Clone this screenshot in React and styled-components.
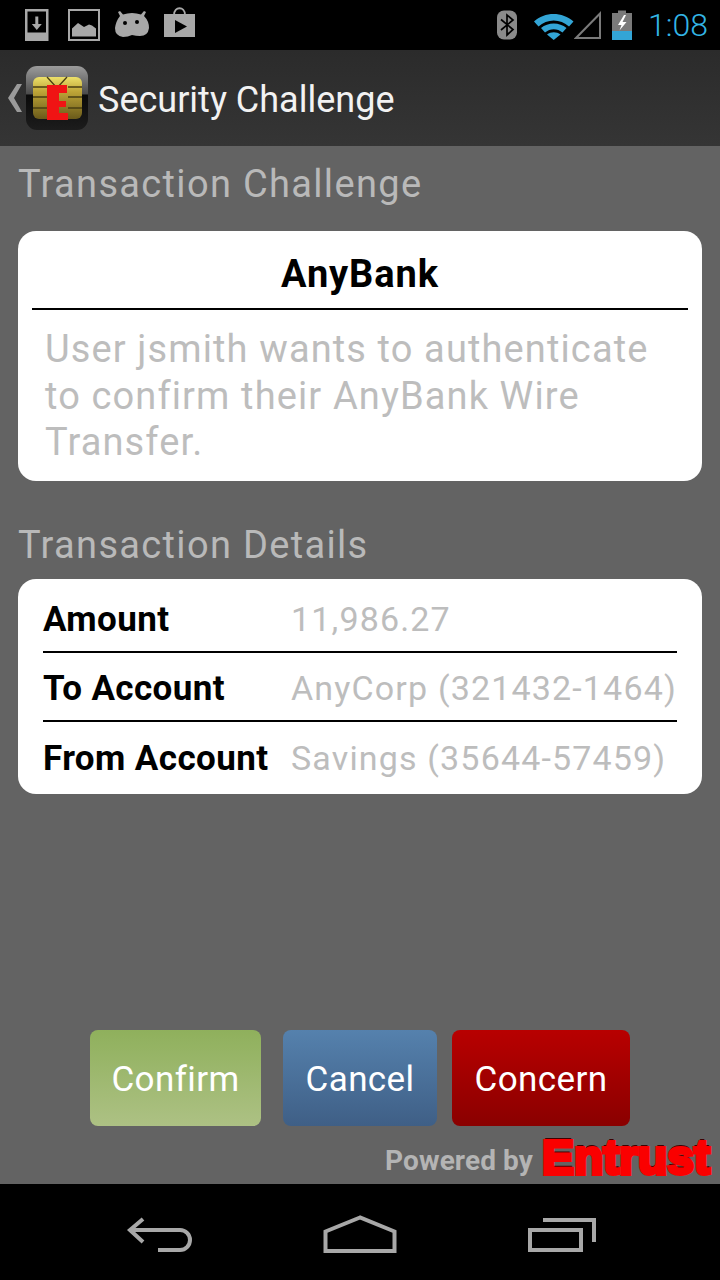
import React from "react";
import styled, { createGlobalStyle } from "styled-components";

const GlobalStyle = createGlobalStyle`
  html, body {
    margin: 0;
    padding: 0;
    background: #000;
  }
  body {
    font-family: Roboto, "Liberation Sans", sans-serif;
  }
`;

const DETAILS = [
  { label: "Amount", value: "11,986.27" },
  { label: "To Account", value: "AnyCorp (321432-1464)" },
  { label: "From Account", value: "Savings (35644-57459)" },
];

function NotificationIcons() {
  return (
    <IconRow>
      <svg width="28" height="32" viewBox="0 0 28 32">
        <path fill="#a8a8a8" d="M0 0h23.500v32H0z" />
        <path fill="#000" d="M2.500 2.500h18.500v21H2.500z" />
        <path fill="#a8a8a8" d="M10.300 7.500h3v7.500h3.500l-5 6-5-6h3.500z" />
      </svg>
      <svg width="32" height="32" viewBox="0 0 32 32">
        <path fill="none" stroke="#a8a8a8" strokeWidth="2" d="M1 1h30v30h-30z" />
        <path fill="#a8a8a8" d="M4 27.500v-8l6-5.500 6 4 5-2.500 3 1 4 3v8z" />
      </svg>
      <svg width="34" height="32" viewBox="0 0 34 32">
        <path fill="#a8a8a8" d="M5 7L3 3l2-1 3 3.500Q17 2.500 26 5.500L29 2l2 1-2 4Q34 12 34 19 33 27 25 27 21 27 17 26 13 28 8 28 0 27 0 19 1 12 5 7z" />
        <circle cx="10" cy="14" r="2" fill="#000" />
        <circle cx="22" cy="13" r="2" fill="#000" />
      </svg>
      <svg width="31" height="36" viewBox="0 0 31 36">
        <path fill="none" stroke="#a8a8a8" strokeWidth="1.800" d="M10 8c0-9 11-9 11 0" />
        <path fill="#a8a8a8" d="M0 7h31v23h-31z" />
        <path fill="#000" d="M11 13l12 6.500-12 6.500z" />
      </svg>
    </IconRow>
  );
}

function SystemIcons() {
  return (
    <IconRow>
      <Bluetooth width="22" height="30" viewBox="0 0 22 30">
        <rect x="1" y="0.500" width="20" height="29" rx="7" fill="#8a8a8a" />
        <path fill="none" stroke="#000" strokeWidth="1.700" d="M5 9.500l12 10-6 5.500v-20l6 5-12 10" />
      </Bluetooth>
      <WifiGap>
        <svg width="40" height="30" viewBox="0 0 40 30">
          <path fill="#33a5d6" d="M0 11.500C10.500 1.500 28.500 1.500 39.500 11.500L35 16.500C26.500 8.500 13 8.500 4.500 16.500z" />
          <path fill="#33a5d6" d="M7 18C14 12 25.500 12 32.500 18L28.500 22.500C23.500 18 16 18 11 22.500z" />
          <path fill="#33a5d6" d="M13 24.500C17 21.500 22.500 21.500 26.500 24.500L19.700 30z" />
        </svg>
        <svg width="28" height="30" viewBox="0 0 28 30">
          <path fill="none" stroke="#7a7a7a" strokeWidth="2" d="M26 3.500v24.500h-24z" />
        </svg>
      </WifiGap>
      <svg width="20" height="30" viewBox="0 0 20 30">
        <path fill="#7a7a7a" d="M6 0.500h8v2.500h6v27h-20v-27h6z" />
        <path fill="#33a5d6" d="M0 21h20v9h-20z" />
        <path fill="#fff" d="M12 5l-6 10h3.500l-2 5.500 7-8.500h-4l3.500-7z" />
      </svg>
      <Clock>1:08</Clock>
    </IconRow>
  );
}

function AppIcon() {
  return (
    <svg width="62" height="64" viewBox="0 0 62 64">
      <defs>
        <linearGradient id="iconShine" x1="0" y1="0" x2="0" y2="1">
          <stop offset="0" stopColor="#9c9c9c" />
          <stop offset="0.440" stopColor="#4a4a4a" />
          <stop offset="0.450" stopColor="#0a0a0a" />
          <stop offset="1" stopColor="#1c1c1c" />
        </linearGradient>
        <linearGradient id="chipGold" x1="0" y1="0" x2="0" y2="1">
          <stop offset="0" stopColor="#ece06a" />
          <stop offset="0.350" stopColor="#bda437" />
          <stop offset="1" stopColor="#6a5a1a" />
        </linearGradient>
      </defs>
      <rect width="62" height="64" rx="11" fill="url(#iconShine)" />
      <rect x="7" y="11" width="49" height="42" rx="6" fill="url(#chipGold)" />
      <path fill="none" stroke="#4a3f12" strokeWidth="1.300" d="M7 21h14M42 21h14M7 31h14M42 31h14M7 42h14M42 42h14M21 11l10 11 10-11" />
      <path fill="#f01414" d="M21 19h20v8h-8v8h7v6h-7v6h9v7h-21z" />
    </svg>
  );
}

export default function App() {
  return (
    <Screen>
      <GlobalStyle />
      <StatusBar>
        <NotificationIcons />
        <SystemIcons />
      </StatusBar>
      <ActionBar>
        <BackChevron viewBox="0 0 14 28">
          <path fill="#9a9a9a" d="M9 0h5L6 14l8 14H9L0 14z" />
        </BackChevron>
        <AppIcon />
        <BarTitle>Security Challenge</BarTitle>
      </ActionBar>
      <Content>
        <SectionTitle>Transaction Challenge</SectionTitle>
        <Card>
          <BankName>AnyBank</BankName>
          <Message>
            User jsmith wants to authenticate to confirm their AnyBank Wire
            Transfer.
          </Message>
        </Card>
        <DetailsTitle>Transaction Details</DetailsTitle>
        <DetailsCard>
          {DETAILS.map((d) => (
            <DetailRow key={d.label}>
              <DetailLabel>{d.label}</DetailLabel>
              <DetailValue>{d.value}</DetailValue>
            </DetailRow>
          ))}
        </DetailsCard>
        <Spacer />
        <Buttons>
          <ActionButton $width={171} $from="#8fb05c" $to="#adc184">
            Confirm
          </ActionButton>
          <ActionButton $width={154} $gap={22} $from="#5581ad" $to="#3f5f86">
            Cancel
          </ActionButton>
          <ActionButton $width={178} $gap={15} $from="#b80000" $to="#8a0000">
            Concern
          </ActionButton>
        </Buttons>
        <PoweredRow>
          <PoweredBy>Powered by</PoweredBy>
          <Entrust>Entrust</Entrust>
        </PoweredRow>
      </Content>
      <NavBar>
        <svg width="68" height="38" viewBox="0 -3 68 38">
          <path fill="none" stroke="#a8a8a8" strokeWidth="4" d="M17 1L4 12l13 12M4 12h50a10 10 0 0 1 0 20h-22" />
        </svg>
        <svg width="74" height="38" viewBox="0 0 74 38">
          <path fill="none" stroke="#a8a8a8" strokeWidth="4" d="M37 2.500L2.500 16.500v19.500h69v-19.500z" />
        </svg>
        <svg width="70" height="38" viewBox="0 -3 70 38">
          <path fill="none" stroke="#a8a8a8" strokeWidth="4" d="M4 12h51v20h-51zM17 2h51v22" />
        </svg>
      </NavBar>
    </Screen>
  );
}

const Screen = styled.div`
  width: 720px;
  height: 1280px;
  display: flex;
  flex-direction: column;
  overflow: hidden;
`;

const StatusBar = styled.div`
  height: 50px;
  flex: none;
  display: flex;
  align-items: center;
  justify-content: space-between;
  padding: 0 12px 0 25px;
  box-sizing: border-box;
  background: #000;
`;

const IconRow = styled.div`
  display: flex;
  align-items: center;
  gap: 15px;
`;

const Bluetooth = styled.svg`
  margin-right: 1px;
`;

const WifiGap = styled.div`
  display: flex;
  align-items: center;
  gap: 0;
  margin-right: -5px;
`;

const Clock = styled.span`
  font-size: 32px;
  font-weight: 300;
  line-height: 50px;
  color: #33b5e5;
  margin-left: 1px;
`;

const ActionBar = styled.div`
  height: 96px;
  flex: none;
  display: flex;
  align-items: center;
  padding: 0 0 0 8px;
  box-sizing: border-box;
  background: linear-gradient(#2b2b2b, #353535);
`;

const BackChevron = styled.svg`
  width: 14px;
  height: 28px;
  margin-right: 4px;
`;

const BarTitle = styled.span`
  font-size: 36px;
  color: #f2f2f2;
  margin-left: 10px;
  margin-top: 4px;
`;

const Content = styled.div`
  flex: 1;
  display: flex;
  flex-direction: column;
  padding: 0 18px;
  background: #636363;
  min-height: 0;
`;

const SectionTitle = styled.h2`
  margin: 14px 0 23px;
  font-size: 38px;
  line-height: 48px;
  font-weight: 400;
  letter-spacing: 1.33px;
  color: #b9b9b9;
`;

const DetailsTitle = styled(SectionTitle)`
  margin: 40px 0 10px;
`;

const Card = styled.div`
  background: #fff;
  border-radius: 18px;
  padding: 0 14px 0;
  height: 250px;
  box-sizing: border-box;
`;

const BankName = styled.div`
  height: 77px;
  line-height: 86px;
  text-align: center;
  font-size: 38px;
  font-weight: 700;
  letter-spacing: 0.9px;
  color: #000;
  border-bottom: 2px solid #000;
`;

const Message = styled.p`
  margin: 16px 0 0;
  padding: 0 13px;
  font-size: 38px;
  line-height: 46.5px;
  letter-spacing: 1.12px;
  color: #bdbdbd;
`;

const DetailsCard = styled.div`
  background: #fff;
  border-radius: 18px;
  padding: 5px 25px 3px 25px;
`;

const DetailRow = styled.div`
  display: flex;
  align-items: center;
  height: 69px;
  padding-top: 3px;
  box-sizing: border-box;
  border-bottom: 2px solid #000;

  &:last-child {
    border-bottom: none;
  }
`;

const DetailLabel = styled.span`
  width: 248px;
  flex: none;
  font-size: 35px;
  font-weight: 700;
  letter-spacing: 0.4px;
  color: #000;
  white-space: nowrap;
`;

const DetailValue = styled.span`
  font-size: 34px;
  letter-spacing: 1.16px;
  color: #bdbdbd;
  white-space: nowrap;
`;

const Spacer = styled.div`
  flex: 1;
`;

const Buttons = styled.div`
  display: flex;
  padding-left: 72px;
`;

const ActionButton = styled.button`
  width: ${(p) => p.$width}px;
  height: 96px;
  margin-left: ${(p) => p.$gap || 0}px;
  padding: 2px 0 0;
  border: none;
  border-radius: 8px;
  font-family: inherit;
  font-size: 35px;
  letter-spacing: 0.4px;
  color: #fff;
  background: linear-gradient(${(p) => p.$from}, ${(p) => p.$to});
`;

const PoweredRow = styled.div`
  height: 58px;
  display: flex;
  justify-content: flex-end;
  align-items: center;
  gap: 9px;
  margin-right: -10px;
`;

const PoweredBy = styled.span`
  font-size: 28px;
  font-weight: 700;
  letter-spacing: 0.1px;
  color: #b4b4b4;
  margin-top: 10px;
`;

const Entrust = styled.span`
  font-family: "Liberation Sans", Arial, sans-serif;
  font-size: 48px;
  line-height: 44px;
  font-weight: 700;
  color: #fa0000;
  -webkit-text-stroke: 4px #fa0000;
  text-shadow: 0 -3px 0 #400000;
  margin-top: 6px;
  margin-right: 2px;
`;

const NavBar = styled.div`
  height: 96px;
  flex: none;
  display: flex;
  align-items: center;
  justify-content: space-between;
  padding: 3px 124px 0 126px;
  box-sizing: border-box;
  background: #000;
`;
